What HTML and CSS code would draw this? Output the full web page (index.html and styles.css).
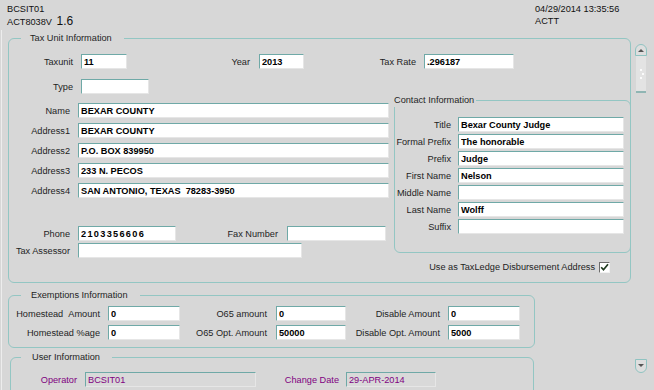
FILE: index.html
```html
<!DOCTYPE html>
<html lang="en">
<head>
    <meta charset="UTF-8">
    <meta name="viewport" content="width=device-width, initial-scale=1.0">
    <title>ACT8038V - Tax Unit</title>
    <link rel="stylesheet" href="styles.css">
</head>
<body>
    <div class="topbar">
        <div class="topbar-left">
            <div>BCSIT01</div>
            <div>ACT8038V <span class="version">1.6</span></div>
        </div>
        <div class="topbar-right">
            <div>04/29/2014 13:35:56</div>
            <div>ACTT</div>
        </div>
    </div>

    <div class="window">
        <div class="content">
            <!-- Tax unit -->
            <fieldset class="frame taxunit">
                <legend>Tax Unit Information</legend>
                <div class="row row-top">
                    <label class="lbl l-unit">Taxunit</label><input class="f-unit" value="11" readonly>
                    <label class="lbl l-year">Year</label><input class="f-year" value="2013" readonly>
                    <label class="lbl l-rate">Tax Rate</label><input class="f-rate" value=".296187" readonly>
                </div>
                <div class="row row-type">
                    <label class="lbl l-unit">Type</label><input class="f-type" value="" readonly>
                </div>

                <div class="split">
                    <div class="address">
                        <div class="row"><label class="lbl l-addr">Name</label><input class="f-addr" value="BEXAR COUNTY" readonly></div>
                        <div class="row"><label class="lbl l-addr">Address1</label><input class="f-addr" value="BEXAR COUNTY" readonly></div>
                        <div class="row"><label class="lbl l-addr">Address2</label><input class="f-addr" value="P.O. BOX 839950" readonly></div>
                        <div class="row"><label class="lbl l-addr">Address3</label><input class="f-addr" value="233 N. PECOS" readonly></div>
                        <div class="row"><label class="lbl l-addr">Address4</label><input class="f-addr" value="SAN ANTONIO, TEXAS  78283-3950" readonly></div>
                        <div class="row row-phone">
                            <label class="lbl l-addr">Phone</label><input class="f-phone" value="2103356606" readonly>
                            <label class="lbl l-fax">Fax Number</label><input class="f-fax" value="" readonly>
                        </div>
                        <div class="row row-assessor"><label class="lbl l-addr">Tax Assessor</label><input class="f-assessor" value="" readonly></div>
                    </div>

                    <div class="contact-col">
                        <fieldset class="frame contact">
                            <legend>Contact Information</legend>
                            <div class="row"><label class="lbl l-contact">Title</label><input class="f-contact" value="Bexar County Judge" readonly></div>
                            <div class="row"><label class="lbl l-contact">Formal Prefix</label><input class="f-contact" value="The honorable" readonly></div>
                            <div class="row"><label class="lbl l-contact">Prefix</label><input class="f-contact" value="Judge" readonly></div>
                            <div class="row"><label class="lbl l-contact">First Name</label><input class="f-contact" value="Nelson" readonly></div>
                            <div class="row"><label class="lbl l-contact">Middle Name</label><input class="f-contact" value="" readonly></div>
                            <div class="row"><label class="lbl l-contact">Last Name</label><input class="f-contact" value="Wolff" readonly></div>
                            <div class="row"><label class="lbl l-contact">Suffix</label><input class="f-contact" value="" readonly></div>
                        </fieldset>
                        <div class="disburse">
                            <span>Use as TaxLedge Disbursement Address</span>
                            <span class="check">
                                <svg width="9" height="9" viewBox="0 0 9 9"><path d="M1.2 4.2 L3.5 6.8 L8 1.2" fill="none" stroke="#1f3a1f" stroke-width="1.7"/></svg>
                            </span>
                        </div>
                    </div>
                </div>
            </fieldset>

            <!-- Exemptions -->
            <fieldset class="frame exemptions">
                <legend>Exemptions Information</legend>
                <div class="row">
                    <label class="lbl l-home">Homestead&nbsp;&nbsp;Amount</label><input class="f-home" value="0" readonly>
                    <label class="lbl l-o65">O65 amount</label><input class="f-o65" value="0" readonly>
                    <label class="lbl l-dis">Disable Amount</label><input class="f-dis" value="0" readonly>
                </div>
                <div class="row">
                    <label class="lbl l-home">Homestead %age</label><input class="f-home" value="0" readonly>
                    <label class="lbl l-o65">O65 Opt. Amount</label><input class="f-o65" value="50000" readonly>
                    <label class="lbl l-dis">Disable Opt. Amount</label><input class="f-dis" value="5000" readonly>
                </div>
            </fieldset>

            <!-- User -->
            <fieldset class="frame user">
                <legend>User Information</legend>
                <div class="row">
                    <label class="lbl sys l-oper">Operator</label><input class="sys f-oper" value="BCSIT01" readonly>
                    <label class="lbl sys l-date">Change Date</label><input class="sys f-date" value="29-APR-2014" readonly>
                </div>
            </fieldset>
        </div>

        <div class="vscroll">
            <div class="scroll-up"></div>
            <div class="scroll-thumb"><span></span><span></span><span></span></div>
            <div class="scroll-track"></div>
            <div class="scroll-down"></div>
        </div>
    </div>
</body>
</html>
```

FILE: styles.css
```css
* {
    box-sizing: border-box;
}

html, body {
    margin: 0;
    padding: 0;
    height: 390px;
    overflow: hidden;
}

body {
    background-color: #d7d7d7;
    font-family: "Liberation Sans", Arial, sans-serif;
    font-size: 9.2px;
    color: #1e1e1e;
}

/* Header */
.topbar {
    display: flex;
    justify-content: space-between;
    height: 30px;
    padding: 3px 0 0 7px;
    line-height: 12px;
    color: #111;
}

.topbar-right {
    width: 112px;
    margin-right: 7px;
}

.version {
    font-size: 12px;
    margin-left: 2px;
}

/* Layout */
.window {
    display: flex;
}

.content {
    width: 634px;
    margin-left: 1px;
    border-left: 1px solid #ededed;
    padding-bottom: 40px;
}

/* Frames */
.frame {
    margin: 0;
    padding: 0;
    min-width: 0;
    border: 1px solid #93c6c3;
    border-radius: 6px;
}

.frame legend {
    line-height: 13px;
    color: #1e1e1e;
}

.taxunit {
    width: 623px;
    margin: 2px 0 0 6px;
    padding-bottom: 9px;
}

.taxunit legend {
    margin-left: 12px;
    padding: 0 12px 0 9px;
}

.exemptions {
    width: 527px;
    margin: 6px 0 0 6px;
    padding-bottom: 7px;
}

.exemptions legend {
    margin-left: 12px;
    padding: 0 12px 0 10px;
}

.user {
    width: 524px;
    margin: 3px 0 0 8px;
    padding-bottom: 30px;
}

.user legend {
    margin-left: 10px;
    padding: 0 12px 0 11px;
}

/* Rows and fields */
.row {
    display: flex;
    align-items: center;
    height: 15px;
}

.lbl {
    flex: none;
    text-align: right;
    white-space: nowrap;
    padding-right: 8px;
}

input {
    flex: none;
    height: 15px;
    margin: 0;
    padding: 0 2px;
    border: 1px solid;
    border-color: #6fa9a7 #e6e6e6 #e6e6e6 #6fa9a7;
    border-radius: 0;
    background-color: #fff;
    font-family: "Liberation Sans", Arial, sans-serif;
    font-size: 9.2px;
    font-weight: bold;
    color: #000;
    outline: none;
}

.row-top { margin-top: 9px; }
.row-type { margin-top: 10px; }

.l-unit { width: 72px; }
.l-year { width: 132px; padding-right: 9px; }
.l-rate { width: 120px; }
.f-unit { width: 46px; }
.f-year { width: 45px; }
.f-rate { width: 90px; }
.f-type { width: 68px; }

.split {
    display: flex;
    align-items: flex-start;
}

.address {
    width: 385px;
    padding-top: 9px;
}

.address .row + .row { margin-top: 5px; }
.address .row + .row-phone { margin-top: 28px; }
.address .row + .row-assessor { margin-top: 2px; }

.l-addr { width: 69px; }
.l-fax { width: 111px; padding-right: 9px; }
.f-addr { width: 311px; }
.f-phone { width: 98px; letter-spacing: 1.3px; }
.f-fax { width: 99px; }
.f-assessor { width: 224px; }

/* Contact */
.contact-col {
    width: 237px;
    margin-right: -1px;
}

.contact {
    width: 237px;
    padding-top: 10px;
    padding-bottom: 18px;
}

.contact legend {
    margin-left: -1px;
    padding: 0 2px 0 0;
}

.contact .row + .row { margin-top: 2px; }

.l-contact { width: 63px; padding-right: 7px; }
.f-contact { width: 166px; }

.disburse {
    display: flex;
    align-items: center;
    justify-content: flex-end;
    gap: 4px;
    height: 12px;
    margin-top: 8px;
    padding-right: 21px;
}

.check {
    display: flex;
    align-items: center;
    justify-content: center;
    width: 11px;
    height: 11px;
    border: 1px solid;
    border-color: #6b6b6b #f2f2f2 #f2f2f2 #6b6b6b;
    background-color: #fff;
}

/* Exemptions */
.exemptions .row:first-of-type { margin-top: 4px; }
.exemptions .row + .row { margin-top: 4px; }

.l-home { width: 99px; }
.l-o65 { width: 96px; padding-right: 9px; }
.l-dis { width: 102px; }
.f-home { width: 72px; }
.f-o65 { width: 70px; }
.f-dis { width: 72px; }

/* User information (display only) */
.user .row { margin-top: 8px; }

.sys {
    color: #800080;
}

input.sys {
    background-color: #d9d9d9;
    font-weight: normal;
}

.l-oper { width: 74px; }
.l-date { width: 90px; padding-right: 7px; }
.f-oper { width: 171px; }
.f-date { width: 90px; }

/* Scrollbar */
.vscroll {
    display: flex;
    flex-direction: column;
    width: 12px;
    height: 329px;
    margin-top: 14px;
}

.scroll-up, .scroll-down {
    position: relative;
    height: 12px;
    border: 1px solid #8fc3c1;
    background-color: #dedede;
}

.scroll-up {
    border-radius: 6px 6px 0 0;
}

.scroll-down {
    height: 14px;
    border-radius: 0 0 6px 6px;
}

.scroll-up::after, .scroll-down::after {
    content: "";
    position: absolute;
    left: 2px;
    border-left: 3px solid transparent;
    border-right: 3px solid transparent;
}

.scroll-up::after {
    top: 4px;
    border-bottom: 3px solid #555;
}

.scroll-down::after {
    top: 4px;
    border-top: 3px solid #555;
}

.scroll-thumb {
    display: flex;
    flex-direction: column;
    align-items: center;
    justify-content: center;
    gap: 2px;
    width: 10px;
    height: 37px;
    margin-left: 1px;
    background-color: #e3e3e3;
    border-bottom: 2px solid #8fb5b3;
}

.scroll-thumb span {
    width: 2px;
    height: 2px;
    background-color: #fbfbfb;
}

.scroll-thumb span:nth-child(2) {
    margin-left: 4px;
}

.scroll-track {
    flex: 1;
}
```
